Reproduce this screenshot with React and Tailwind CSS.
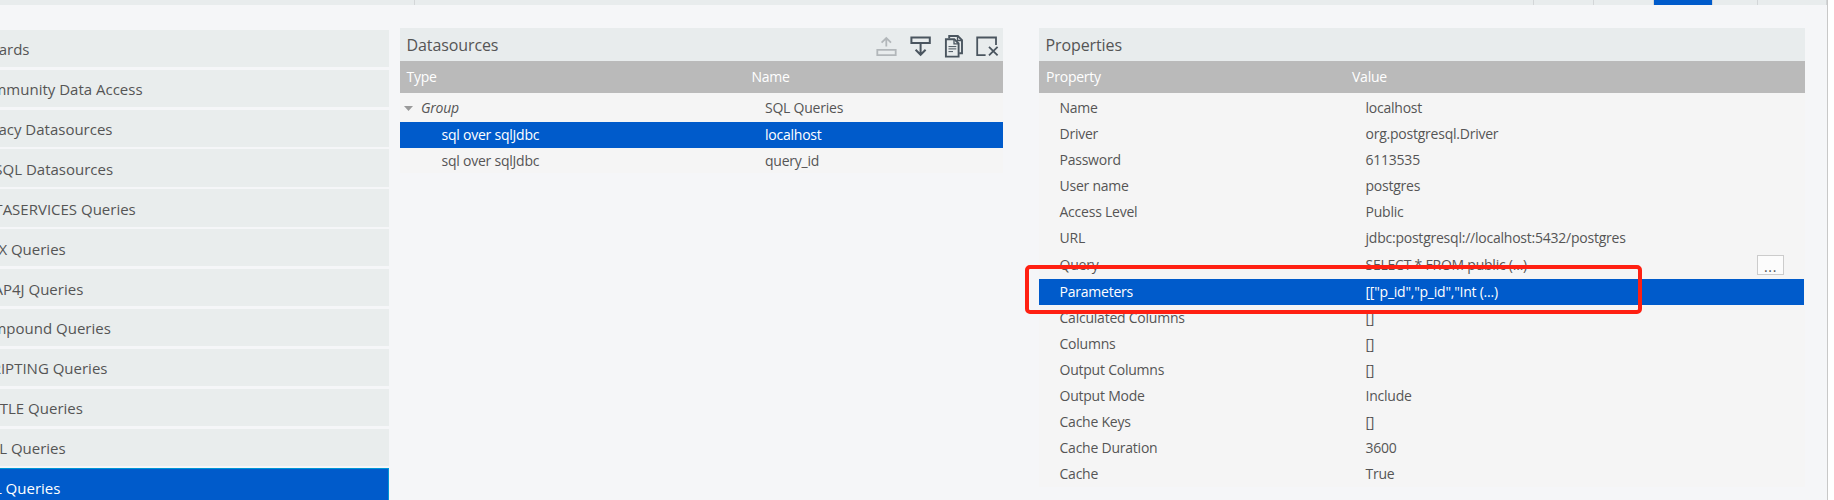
const categories = [
  "Wizards",
  "Community Data Access",
  "Legacy Datasources",
  "NoSQL Datasources",
  "DATASERVICES Queries",
  "MDX Queries",
  "OLAP4J Queries",
  "Compound Queries",
  "SCRIPTING Queries",
  "KETTLE Queries",
  "MQL Queries",
  "SQL Queries",
];

const properties = [
  ["Name", "localhost"],
  ["Driver", "org.postgresql.Driver"],
  ["Password", "6113535"],
  ["User name", "postgres"],
  ["Access Level", "Public"],
  ["URL", "jdbc:postgresql://localhost:5432/postgres"],
  ["Query", "SELECT * FROM public (...)"],
  ["Parameters", '[["p_id","p_id","Int (...)'],
  ["Calculated Columns", "[]"],
  ["Columns", "[]"],
  ["Output Columns", "[]"],
  ["Output Mode", "Include"],
  ["Cache Keys", "[]"],
  ["Cache Duration", "3600"],
  ["Cache", "True"],
];

function rowClass(index) {
  const name = properties[index][0];
  if (name === "Parameters") return "mr-px h-[26px] bg-[#005bcb] leading-[26px] text-white";
  if (name === "Query") return "h-[27px] leading-[26px]";
  return index > 7 ? "h-[26px] leading-[26px]" : "h-[26px] leading-[24px]";
}

function categoryClass(index) {
  if (index === categories.length - 1)
    return "border-r border-t border-[#0096d6] bg-[#005bcb] leading-[39px] text-white";
  return index > 2 && index < 7 ? "bg-[#e9eded] leading-[41px]" : "bg-[#e9eded] leading-[39px]";
}

function TopBar() {
  return (
    <div className="flex h-[5px] w-[1827px] shrink-0 bg-[#e8eced]">
      <div className="w-[415px] border-r border-[#d3d6d8]" />
      <div className="w-[1119px] border-r border-[#d3d6d8]" />
      <div className="w-[60px] border-r border-[#d3d6d8]" />
      <div className="w-[60px] border-r border-[#d3d6d8]" />
      <div className="w-[58px] bg-[#005bcb]" />
      <div className="w-[46px] border-x border-[#d3d6d8]" />
      <div className="flex-1 border-r border-[#d3d6d8]" />
    </div>
  );
}

function Sidebar() {
  return (
    <nav className="mt-[24.75px] flex h-[470.25px] w-[389px] shrink-0 flex-col gap-[2.55px] overflow-hidden text-[15px]">
      {categories.map((label, i) => (
        <div
          key={label}
          className={"h-[37.33px] shrink-0 overflow-hidden whitespace-nowrap " + categoryClass(i)}
        >
          <span className="-ml-[26px]">{label}</span>
        </div>
      ))}
    </nav>
  );
}

function Toolbar() {
  return (
    <div className="flex text-[#4a555f]">
      <svg className="h-[33px] w-[34px] text-[#b2b7ba]" viewBox="870 28 34 33" fill="none" stroke="currentColor" strokeWidth="1.8">
        <path d="M877.3 49.8H895.7V55.2H877.3Z M886.3 46.5V38.5 M881.6 42.6L886.3 38L891 42.6" />
      </svg>
      <svg className="h-[33px] w-[34px]" viewBox="904 28 34 33" fill="none" stroke="currentColor" strokeWidth="2">
        <path d="M911.4 37.4H929.8V42.9H911.4Z M920.6 43V54.5 M915.6 49.8L920.6 54.8L925.6 49.8" />
      </svg>
      <svg className="h-[33px] w-[34px]" viewBox="938 28 34 33" fill="none" stroke="currentColor" strokeWidth="1.9">
        <path d="M949.2 38.6V36H957.8L962 40.2V53.3H959.2" />
        <path d="M957.5 36V40.5H962" strokeWidth="1.3" />
        <path d="M945.9 39.2H954.3L958.6 43.5V56.6H945.9Z" />
        <path d="M954 39.2V43.8H958.6" strokeWidth="1.3" />
        <path d="M948.5 46.6H956.3M948.5 48.9H956.3M948.5 51.6H953" strokeWidth="1" />
      </svg>
      <svg className="h-[33px] w-[31px]" viewBox="972 28 31 33" fill="none" stroke="currentColor" strokeWidth="1.8">
        <path d="M985.6 55.1H977.2V37.5H996V45" />
        <path d="M989 46.8L997.6 55.4M997.6 46.8L989 55.4" />
      </svg>
    </div>
  );
}

function DatasourcesPanel() {
  return (
    <section className="ml-[11px] mt-[23px] h-[145px] w-[603px] shrink-0 bg-[#f5f5f5]">
      <header className="flex h-[33px] justify-between bg-[#e8eced] pl-[6.5px] text-base leading-[35px] tracking-[-0.1px]">
        <h2>Datasources</h2>
        <Toolbar />
      </header>
      <div className="flex h-8 bg-[#bababa] pl-[6.5px] text-sm leading-[31px] tracking-[-0.23px] text-white">
        <span className="w-[345px]">Type</span>
        <span>Name</span>
      </div>
      <div className="pt-[3px] text-sm tracking-[-0.23px]">
        <div className="flex h-[26px] pl-[4px] leading-[24px]">
          <svg className="mr-2 mt-[10px] h-[5px] w-[9px] shrink-0" viewBox="0 0 9 5">
            <path d="M0 0H9L4.5 5Z" fill="#9a9a9a" />
          </svg>
          <span className="w-[344px] italic">Group</span>
          <span>SQL Queries</span>
        </div>
        <div className="flex h-[26px] bg-[#005bcb] pl-[41.5px] leading-[26px] text-white">
          <span className="w-[323.5px]">sql over sqlJdbc</span>
          <span>localhost</span>
        </div>
        <div className="flex h-[26px] pl-[41.5px] leading-[26px]">
          <span className="w-[323.5px]">sql over sqlJdbc</span>
          <span>query_id</span>
        </div>
      </div>
    </section>
  );
}

function PropertiesPanel() {
  return (
    <section className="relative ml-9 mt-[23px] h-[459px] w-[766px] shrink-0 bg-[#f5f5f5]">
      <header className="h-[33px] bg-[#e8eced] pl-[6.5px] text-base leading-[35px] tracking-[-0.1px]">
        <h2>Properties</h2>
      </header>
      <div className="flex h-8 bg-[#bababa] pl-[7px] text-sm leading-[31px] tracking-[-0.23px] text-white">
        <span className="w-[306px]">Property</span>
        <span>Value</span>
      </div>
      <div className="pt-[3px] text-sm tracking-[-0.23px]">
        {properties.map(([name, value], i) => (
          <div key={name} className={"flex pl-[20.5px] " + rowClass(i)}>
            <span className="w-[306px]">{name}</span>
            <span className="flex-1">{value}</span>
            {name === "Query" && (
              <button className="mr-[21px] mt-[3px] h-5 w-[27px] border border-[#cccccc] bg-[#fcfcfc] text-center leading-[21px] tracking-[0.7px]">
                ...
              </button>
            )}
          </div>
        ))}
      </div>
      <div className="absolute left-[-14px] top-[237px] h-[49px] w-[617px] rounded-[5px] border-4 border-[#ff2012]" />
    </section>
  );
}

export default function App() {
  return (
    <div className="h-[500px] w-[1834px] overflow-hidden bg-white font-['Open_Sans','Noto_Sans',sans-serif] text-[#555555]">
      <div className="flex h-full w-[1828px] flex-col border-r border-[#c8c8c8] bg-[#f5f6f8]">
        <TopBar />
        <main className="flex items-start">
          <Sidebar />
          <DatasourcesPanel />
          <PropertiesPanel />
        </main>
      </div>
    </div>
  );
}
